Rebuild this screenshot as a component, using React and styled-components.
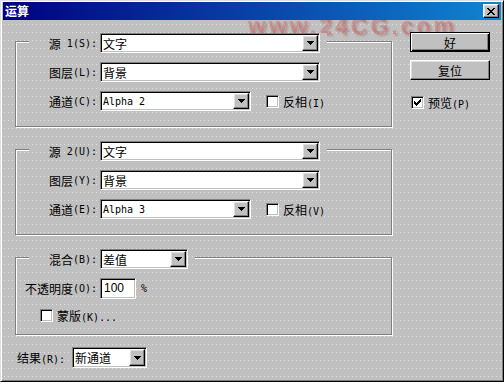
import React from 'react';
import styled, { createGlobalStyle, css } from 'styled-components';

const GlobalStyle = createGlobalStyle`
  html, body {
    margin: 0;
    padding: 0;
    background: #c0c0c0;
  }
  body {
    font-family: "Noto Sans CJK SC", sans-serif;
    font-size: 12px;
    color: #000;
  }
`;

// the faint dotted texture of the dialog face
const face = css`
  background-color: #c0c0c0;
  background-image: conic-gradient(at 1px 1px, transparent 75%, #e2e2e2 0);
  background-size: 4px 8px;
  background-attachment: fixed;
`;

const raised = css`
  box-sizing: border-box;
  background: #c0c0c0;
  border: 1px solid;
  border-color: #fff #000 #000 #fff;
  box-shadow: inset -1px -1px #808080, inset 1px 1px #dfdfdf;
`;

const sunken = css`
  box-sizing: border-box;
  background: #fff;
  border: 1px solid;
  border-color: #808080 #fff #fff #808080;
  box-shadow: inset 1px 1px #000, inset -1px -1px #c0c0c0;
`;

const Window = styled.div`
  position: relative;
  width: 504px;
  height: 382px;
  box-sizing: border-box;
  border: 1px solid;
  border-color: #dfdfdf #000 #000 #dfdfdf;
  box-shadow: inset 1px 1px #fff, inset -1px -1px #808080;
  padding: 1px 2px 2px;
  display: flex;
  flex-direction: column;
  overflow: hidden;
  ${face}
`;

const TitleBar = styled.div`
  position: relative;
  z-index: 2;
  height: 18px;
  flex: none;
  display: flex;
  align-items: center;
  justify-content: space-between;
  padding: 0 2px;
  background: linear-gradient(90deg, #000080, #1084d0);
`;

const Title = styled.span`
  color: #fff;
  font-weight: bold;
  font-size: 12px;
  line-height: 18px;
`;

const CloseButton = styled.div`
  ${raised}
  width: 16px;
  height: 14px;
  display: flex;
  align-items: center;
  justify-content: center;
`;

// site watermark stamped over the screenshot, sits behind the controls
const Watermark = styled.div`
  position: absolute;
  z-index: 0;
  left: 247px;
  top: 12px;
  font-family: "Liberation Sans", Arial, sans-serif;
  font-weight: bold;
  font-size: 23px;
  letter-spacing: 3px;
  color: rgba(215, 80, 80, 0.38);
  text-shadow: 2px 2px 2px rgba(120, 40, 40, 0.25);
  pointer-events: none;
  white-space: nowrap;
`;

const Body = styled.div`
  position: relative;
  z-index: 1;
  display: flex;
  padding: 12px 0 0 12px;
`;

const LeftCol = styled.div`
  width: 377px;
  margin-top: 9px;
  display: flex;
  flex-direction: column;
`;

const GroupBox = styled.div`
  display: flex;
  flex-direction: column;
  border: 1px solid #808080;
  box-shadow: inset 1px 1px #fff, 1px 1px #fff;
  padding-bottom: ${(p) => p.$pb}px;
  & + & {
    margin-top: 22px;
  }
`;

const LegendRow = styled.div`
  ${face}
  align-self: flex-start;
  display: flex;
  align-items: center;
  height: 20px;
  margin: -9px 0 0 13px;
  padding-right: 7px;
`;

const Row = styled.div`
  display: flex;
  align-items: center;
  height: 20px;
  margin: ${(p) => p.$gap ?? 9}px 0 0 13px;
`;

const Label = styled.div`
  flex: none;
  width: 68px;
  margin-right: 3px;
  display: flex;
  justify-content: flex-end;
  align-items: center;
  white-space: nowrap;
`;

const Half = styled.span`
  font-family: "DejaVu Sans Mono", "Liberation Mono", monospace;
  font-size: 10px;
  white-space: pre;
`;

const Combo = styled.div`
  ${sunken}
  width: ${(p) => p.$w}px;
  height: ${(p) => p.$h ?? 20}px;
  padding: 1px;
  display: flex;
  align-items: center;
`;

const ComboValue = styled.span`
  flex: 1;
  padding-left: 1px;
  white-space: nowrap;
  overflow: hidden;
  font-family: ${(p) =>
    p.$mono ? '"DejaVu Sans Mono", "Liberation Mono", monospace' : '"Noto Sans CJK SC", sans-serif'};
  font-size: ${(p) => (p.$mono ? 10 : 12)}px;
`;

const DropButton = styled.div`
  ${raised}
  flex: none;
  width: 16px;
  height: 100%;
  display: flex;
  align-items: center;
  justify-content: center;
`;

const TextInput = styled.div`
  ${sunken}
  width: ${(p) => p.$w}px;
  height: 21px;
  padding: 0 3px;
  display: flex;
  align-items: center;
  font-family: "Liberation Sans", Arial, sans-serif;
  font-size: 12px;
`;

const Unit = styled.span`
  margin-left: 5px;
  font-family: "DejaVu Sans Mono", monospace;
  font-size: 10px;
`;

const CheckRow = styled.div`
  display: flex;
  align-items: center;
  gap: 4px;
  height: 13px;
  margin-left: ${(p) => p.$ml ?? 0}px;
  margin-top: ${(p) => p.$mt ?? 0}px;
  white-space: nowrap;
`;

const Box = styled.div`
  ${sunken}
  flex: none;
  width: 13px;
  height: 13px;
  display: flex;
  align-items: center;
  justify-content: center;
`;

const ResultRow = styled.div`
  display: flex;
  align-items: center;
  gap: 7px;
  margin: 12px 0 0 2px;
  white-space: nowrap;
`;

const RightCol = styled.div`
  width: 80px;
  margin-left: 18px;
  display: flex;
  flex-direction: column;
`;

const Button = styled.div`
  ${raised}
  width: 80px;
  height: 20px;
  display: flex;
  align-items: center;
  justify-content: center;
  & + & {
    margin-top: 8px;
  }
  ${(p) =>
    p.$default &&
    css`
      border-color: #000;
      box-shadow: inset 1px 1px #fff, inset -1px -1px #000, inset -2px -2px #808080;
    `}
`;

const Arrow = () => (
  <svg width="7" height="4" viewBox="0 0 7 4" shapeRendering="crispEdges">
    <path d="M0 0H7V1H6V2H5V3H4V4H3V3H2V2H1V1H0Z" fill="#000" />
  </svg>
);

const CloseGlyph = () => (
  <svg width="8" height="7" viewBox="0 0 8 7" shapeRendering="crispEdges">
    <path
      d="M0 0H2V1H3V2H5V1H6V0H8V1H7V2H6V3H5V4H6V5H7V6H8V7H6V6H5V5H3V6H2V7H0V6H1V5H2V4H3V3H2V2H1V1H0Z"
      fill="#000"
    />
  </svg>
);

const Check = ({ checked, children, ...rest }) => (
  <CheckRow {...rest}>
    <Box>
      {checked && (
        <svg width="7" height="7" viewBox="0 0 7 7" shapeRendering="crispEdges">
          <path
            d="M6 0H7V3H6V4H5V5H4V6H3V7H2V6H1V5H0V2H1V3H2V4H3V3H4V2H5V1H6Z"
            fill="#000"
          />
        </svg>
      )}
    </Box>
    <span>{children}</span>
  </CheckRow>
);

const Select = ({ w, h, value, mono }) => (
  <Combo $w={w} $h={h}>
    <ComboValue $mono={mono}>{value}</ComboValue>
    <DropButton>
      <Arrow />
    </DropButton>
  </Combo>
);

const SourceGroup = ({ n, key1, key2, key3, keyInv, channel }) => (
  <GroupBox $pb={15}>
    <LegendRow>
      <Label>
        源<Half> {n}({key1}):</Half>
      </Label>
      <Select w={220} value="文字" />
    </LegendRow>
    <Row>
      <Label>
        图层<Half>({key2}):</Half>
      </Label>
      <Select w={220} value="背景" />
    </Row>
    <Row>
      <Label>
        通道<Half>({key3}):</Half>
      </Label>
      <Select w={151} value={channel} mono />
      <Check $ml={15}>
        反相<Half>({keyInv})</Half>
      </Check>
    </Row>
  </GroupBox>
);

export default function App() {
  return (
    <>
      <GlobalStyle />
      <Window>
        <TitleBar>
          <Title>运算</Title>
          <CloseButton>
            <CloseGlyph />
          </CloseButton>
        </TitleBar>
        <Watermark>www.24CG.com</Watermark>
        <Body>
          <LeftCol>
            <SourceGroup n={1} key1="S" key2="L" key3="C" keyInv="I" channel="Alpha 2" />
            <SourceGroup n={2} key1="U" key2="Y" key3="E" keyInv="V" channel="Alpha 3" />
            <GroupBox $pb={12}>
              <LegendRow>
                <Label>
                  混合<Half>(B):</Half>
                </Label>
                <Select w={88} value="差值" />
              </LegendRow>
              <Row>
                <Label>
                  不透明度<Half>(O):</Half>
                </Label>
                <TextInput $w={36}>100</TextInput>
                <Unit>%</Unit>
              </Row>
              <Check $ml={24} $mt={11}>
                蒙版<Half>(K)...</Half>
              </Check>
            </GroupBox>
            <ResultRow>
              <span>
                结果<Half>(R):</Half>
              </span>
              <Select w={75} h={21} value="新通道" />
            </ResultRow>
          </LeftCol>
          <RightCol>
            <Button $default>好</Button>
            <Button>复位</Button>
            <Check checked $ml={1} $mt={16}>
              预览<Half>(P)</Half>
            </Check>
          </RightCol>
        </Body>
      </Window>
    </>
  );
}
